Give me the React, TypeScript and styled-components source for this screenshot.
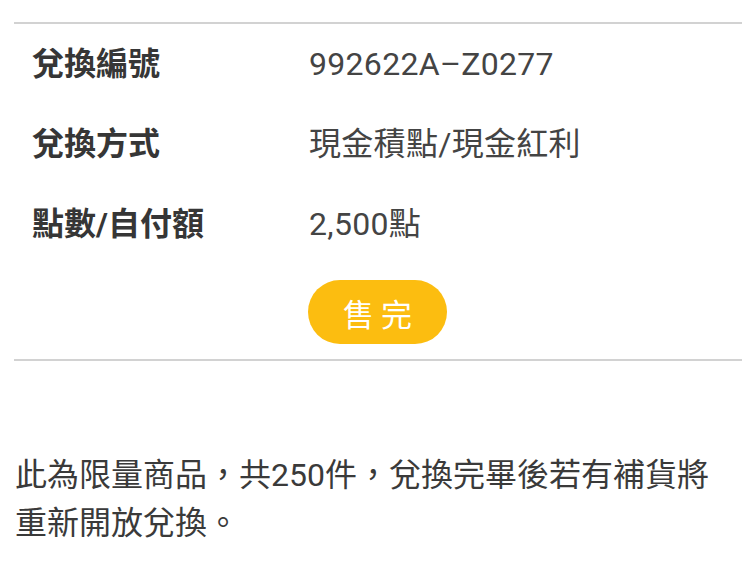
import React from "react";
import styled, { createGlobalStyle } from "styled-components";

const Global = createGlobalStyle`
  html, body { margin: 0; padding: 0; background: #fff; }
  body { font-family: Roboto, "Noto Sans CJK TC", sans-serif; -webkit-font-smoothing: antialiased; }
`;

const Page = styled.div`
  width: 750px;
  padding-top: 22px;
`;

const Card = styled.section`
  margin: 0 8px 0 14px;
  border-top: 2px solid #d2d2d2;
  border-bottom: 2px solid #d2d2d2;
  padding: 0 0 15px 18px;
`;

const Row = styled.div`
  display: grid;
  grid-template-columns: 277px 1fr;
  align-items: center;
  height: 80px;
`;

const Label = styled.div`
  font-family: Roboto, "Noto Sans CJK TC", sans-serif;
  font-size: 32px;
  font-weight: 700;
  color: #363636;
  line-height: 1;
`;

const Value = styled.div`
  font-family: Roboto, "Noto Sans CJK TC", sans-serif;
  font-size: 32px;
  font-weight: 400;
  color: #444;
  line-height: 1;
  letter-spacing: 0.3px;
`;

const ButtonRow = styled.div`
  display: grid;
  grid-template-columns: 277px 1fr;
  padding-top: 16px;
`;

const SoldOut = styled.div`
  grid-column: 2;
  width: 139px;
  height: 64px;
  border-radius: 32px;
  background: #fcbd10;
  color: #fff;
  font-family: "Noto Sans CJK TC", sans-serif;
  font-size: 31px;
  display: flex;
  align-items: center;
  justify-content: center;
  white-space: pre;
  margin-left: -1px;
`;

const Note = styled.p`
  margin: 90px 0 0 0;
  padding: 0 16px 0 15px;
  font-family: Roboto, "Noto Sans CJK TC", sans-serif;
  font-size: 32px;
  line-height: 48px;
  color: #3a3a3a;
`;

const rows = [
  { label: "兌換編號", value: "992622A–Z0277" },
  { label: "兌換方式", value: "現金積點/現金紅利" },
  { label: "點數/自付額", value: "2,500點" },
];

export default function App() {
  return (
    <Page>
      <Global />
      <Card>
        {rows.map((r) => (
          <Row key={r.label}>
            <Label>{r.label}</Label>
            <Value>{r.value}</Value>
          </Row>
        ))}
        <ButtonRow>
          <SoldOut>{"售 完"}</SoldOut>
        </ButtonRow>
      </Card>
      <Note>此為限量商品，共250件，兌換完畢後若有補貨將重新開放兌換。</Note>
    </Page>
  );
}
